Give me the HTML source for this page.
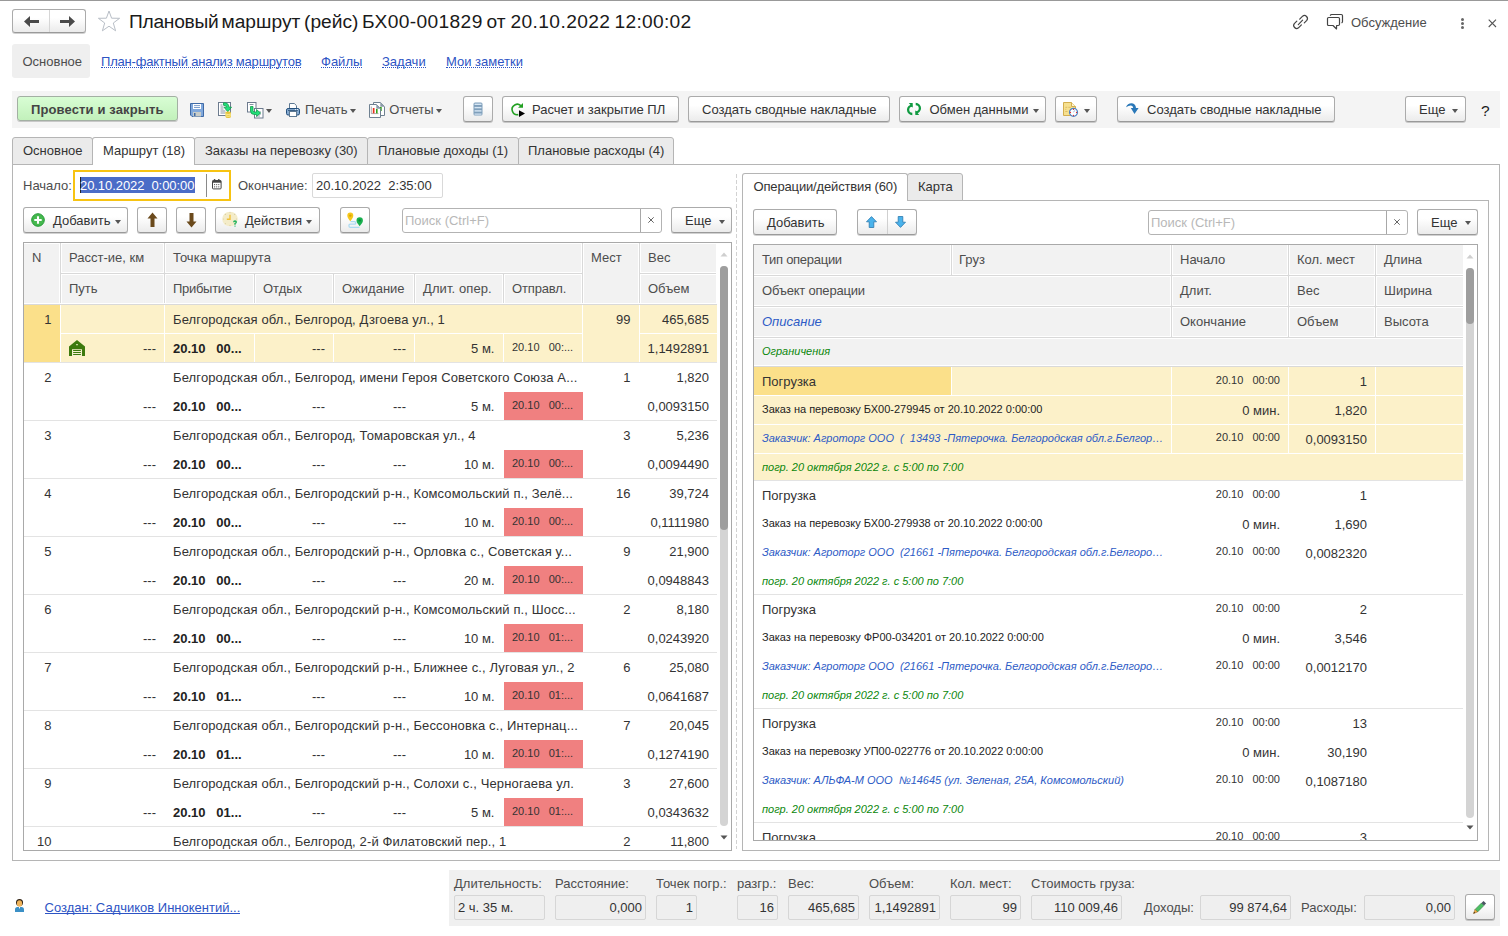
<!DOCTYPE html><html><head><meta charset="utf-8"><style>
html,body{margin:0;padding:0;background:#fff;width:1508px;height:936px;overflow:hidden;position:relative;font-family:"Liberation Sans",sans-serif;}
.t{position:absolute;white-space:nowrap;font-family:"Liberation Sans",sans-serif;}
.b{position:absolute;box-sizing:border-box;}
.btn{position:absolute;border:1px solid #ababab;border-bottom-color:#9a9a9a;border-radius:3px;background:linear-gradient(#ffffff 35%,#ebebeb);box-shadow:0 1px 0 rgba(0,0,0,0.18);}
svg{position:absolute;overflow:visible;}
a{color:inherit}
</style></head><body>
<div class="b" style="left:0px;top:0px;width:1508px;height:1px;background:#999;"></div>
<div class="btn" style="left:12px;top:9px;width:72px;height:22px;"></div>
<div class="b" style="left:49px;top:10px;width:1px;height:22px;background:#d6d6d6;"></div>
<svg style="left:24px;top:16px" width="15" height="11" viewBox="0 0 15 11"><path d="M0 5.5 L6 0 L6 4 L15 4 L15 7 L6 7 L6 11 Z" fill="#4a4a4a"/></svg>
<svg style="left:60px;top:16px" width="15" height="11" viewBox="0 0 15 11"><path d="M15 5.5 L9 0 L9 4 L0 4 L0 7 L9 7 L9 11 Z" fill="#4a4a4a"/></svg>
<svg style="left:97px;top:10px" width="24" height="22" viewBox="0 0 24 22"><path d="M12 1 L14.6 8.2 L22.6 8.3 L16.3 13 L18.6 20.8 L12 16.2 L5.4 20.8 L7.7 13 L1.4 8.3 L9.4 8.2 Z" fill="none" stroke="#b8bec6" stroke-width="1"/></svg>
<div class="t" style="left:129px;top:11.25px;font-size:19.2px;line-height:22px;color:#1a1a1a;letter-spacing:-0.27px;">Плановый</div>
<div class="t" style="left:221.5px;top:11.25px;font-size:19.2px;line-height:22px;color:#1a1a1a;letter-spacing:0px;">маршрут</div>
<div class="t" style="left:304px;top:11.25px;font-size:19.2px;line-height:22px;color:#1a1a1a;letter-spacing:0px;">(рейс)</div>
<div class="t" style="left:362px;top:11.25px;font-size:19.2px;line-height:22px;color:#1a1a1a;letter-spacing:0.36px;">БХ00-001829</div>
<div class="t" style="left:486.5px;top:11.25px;font-size:19.2px;line-height:22px;color:#1a1a1a;letter-spacing:0px;">от</div>
<div class="t" style="left:510.5px;top:11.25px;font-size:19.2px;line-height:22px;color:#1a1a1a;letter-spacing:0.38px;">20.10.2022</div>
<div class="t" style="left:614.5px;top:11.25px;font-size:19.2px;line-height:22px;color:#1a1a1a;letter-spacing:0.28px;">12:00:02</div>
<svg style="left:1293px;top:14px" width="16" height="17" viewBox="0 0 16 17"><g fill="none" stroke="#444" stroke-width="1.2" stroke-linecap="round"><path d="M5.3 10.6 L9.6 6.2"/><path d="M6.7 5.1 L9.6 2.2 A3 3 0 0 1 13.8 6.4 L11.3 8.9"/><path d="M8.4 10.9 L5.5 13.8 A3 3 0 0 1 1.3 9.6 L3.8 7.1"/></g></svg>
<svg style="left:1326px;top:13px" width="18" height="18" viewBox="0 0 18 18"><g fill="none" stroke="#444" stroke-width="1.2" stroke-linejoin="round"><path d="M2.7 4.5 H12.3 Q13.5 4.5 13.5 5.7 V11.3 Q13.5 12.5 12.3 12.5 H10.6 L10.5 16 L7 12.5 H2.5 Q1.5 12.5 1.5 11.3 V5.7 Q1.5 4.5 2.7 4.5 Z"/><path d="M4.4 2.3 Q4.7 1.5 5.6 1.5 H15.3 Q16.5 1.5 16.5 2.7 V8.5 Q16.5 9.4 15.9 9.7" stroke-linecap="round"/></g></svg>
<div class="t" style="left:1351px;top:15.20px;font-size:13px;line-height:15px;color:#4d4d4d;">Обсуждение</div>
<div class="b" style="left:1461px;top:18px;width:3px;height:3px;background:#666;border-radius:50%;"></div>
<div class="b" style="left:1461px;top:22px;width:3px;height:3px;background:#666;border-radius:50%;"></div>
<div class="b" style="left:1461px;top:26px;width:3px;height:3px;background:#666;border-radius:50%;"></div>
<svg style="left:1488px;top:18.5px" width="9" height="9" viewBox="0 0 9 9"><path d="M0.7 0.7 L8 8 M8 0.7 L0.7 8" stroke="#555" stroke-width="1.1"/></svg>
<div class="b" style="left:12px;top:44px;width:78px;height:34px;background:#efefef;border-radius:3px;"></div>
<div class="t" style="left:22.5px;top:53.60px;font-size:13px;line-height:15px;color:#4d4d4d;">Основное</div>
<div class="t" style="left:101px;top:53.60px;font-size:13px;line-height:15px;color:#2d54c4;letter-spacing:-0.2px;">План-фактный анализ маршрутов</div>
<div class="b" style="left:101px;top:67.1px;width:200px;height:1px;border-top:1px dotted #2d54c4;"></div>
<div class="t" style="left:321px;top:53.60px;font-size:13px;line-height:15px;color:#2d54c4;">Файлы</div>
<div class="b" style="left:321px;top:67.1px;width:41px;height:1px;border-top:1px dotted #2d54c4;"></div>
<div class="t" style="left:382px;top:53.60px;font-size:13px;line-height:15px;color:#2d54c4;">Задачи</div>
<div class="b" style="left:382px;top:67.1px;width:44px;height:1px;border-top:1px dotted #2d54c4;"></div>
<div class="t" style="left:446px;top:53.60px;font-size:13px;line-height:15px;color:#2d54c4;">Мои заметки</div>
<div class="b" style="left:446px;top:67.1px;width:76px;height:1px;border-top:1px dotted #2d54c4;"></div>
<div class="b" style="left:12px;top:91px;width:1488px;height:37px;background:#f4f4f4;"></div>
<div class="btn" style="left:17px;top:96px;width:159px;height:23px;border-color:#a3b0a3;background:linear-gradient(#d8fdd4,#c2f1bb);"></div>
<div class="t" style="left:31px;top:101.50px;font-size:13px;line-height:15px;color:#444;font-weight:bold;letter-spacing:0.13px;">Провести и закрыть</div>
<svg style="left:190px;top:103px" width="14" height="14" viewBox="0 0 14 14"><path d="M0.5 0.5 H13.5 V13.5 H2 L0.5 12 Z" fill="#80a8dc" stroke="#3f6aa6"/><rect x="3" y="1" width="8" height="5" fill="#fff"/><rect x="4" y="2.2" width="6" height="0.9" fill="#6f95c8"/><rect x="4" y="4.1" width="6" height="0.9" fill="#6f95c8"/><rect x="3" y="9" width="8" height="4.5" fill="#c8ccc8"/><rect x="4" y="10" width="1.5" height="3" fill="#3f6aa6"/></svg>
<svg style="left:218px;top:102px" width="16" height="17" viewBox="0 0 16 17"><rect x="0.5" y="0.5" width="12" height="13" fill="#fff" stroke="#6d7b8e"/><path d="M2.5 3 h2 M2.5 5 h3 M2.5 7 h3 M2.5 9 h5 M2.5 11 h5" stroke="#7a8799" stroke-width="0.9"/><path d="M5.5 0.8 Q10.5 0.3 11 5.2 L13.5 5.2 L9.8 9.8 L6 5.2 L8.6 5.2 Q8.3 3.2 5.5 3.3 Z" fill="#21e07a" stroke="#129a4a" stroke-width="0.8"/><path d="M7.5 10.5 Q7.5 9.5 10.2 9.5 Q13 9.5 13 10.5 V14.8 Q13 16 10.2 16 Q7.5 16 7.5 14.8 Z" fill="#e6c23a"/><path d="M7.5 12 Q10.2 13 13 12 M7.5 13.8 Q10.2 14.8 13 13.8" stroke="#fff3a0" stroke-width="0.9" fill="none"/></svg>
<svg style="left:247px;top:102px" width="17" height="17" viewBox="0 0 17 17"><rect x="0.5" y="0.5" width="8.5" height="9.5" fill="#fff" stroke="#6d7b8e"/><rect x="7.5" y="6.5" width="8.5" height="9.5" fill="#fff" stroke="#6d7b8e"/><path d="M2.5 2.5 h4" stroke="#7a8799" stroke-width="0.9"/><path d="M10 10 h4 M10 12 h4 M10 14 h3" stroke="#7a8799" stroke-width="0.8"/><path d="M3.5 4.5 L6 4.5 L6 8.5 Q6 10 8 10 L9.5 10 L9.5 7.5 L13.5 11 L9.5 14.5 L9.5 12.5 L7.5 12.5 Q3.5 12.5 3.5 9 Z" fill="#21e07a" stroke="#129a4a" stroke-width="0.8"/></svg>
<div class="b" style="left:266px;top:109px;width:0;height:0;border-left:3.5px solid transparent;border-right:3.5px solid transparent;border-top:4px solid #555;"></div>
<svg style="left:286px;top:103px" width="14" height="14" viewBox="0 0 14 14"><path d="M3.5 0.5 H8.3 L10.5 2.7 V5.5 H3.5 Z" fill="#fff" stroke="#5d7892"/><rect x="0.5" y="5.5" width="13" height="6.5" rx="1.6" fill="#86aad0" stroke="#234f7c"/><path d="M2 7.4 H12" stroke="#2a4f74" stroke-width="0.9"/><circle cx="9.6" cy="6.6" r="0.55" fill="#fff"/><circle cx="11.6" cy="6.6" r="0.55" fill="#fff"/><rect x="3.5" y="8.5" width="7" height="5" fill="#fff" stroke="#5d7892"/></svg>
<div class="t" style="left:305px;top:102.00px;font-size:13px;line-height:15px;color:#4d4d4d;">Печать</div>
<div class="b" style="left:350px;top:109px;width:0;height:0;border-left:3.5px solid transparent;border-right:3.5px solid transparent;border-top:4px solid #555;"></div>
<svg style="left:369px;top:102px" width="16" height="16" viewBox="0 0 16 16"><path d="M4.5 0.5 H11.3 L15.5 4.7 V13.5 H4.5 Z" fill="#fff" stroke="#6f8191"/><path d="M11.3 0.5 V4.7 H15.5 Z" fill="#8a9aa8"/><rect x="11" y="5" width="1.7" height="4" fill="#33a31a"/><path d="M0.5 2.5 H7.3 L11.5 6.7 V15.5 H0.5 Z" fill="#fff" stroke="#6f8191"/><path d="M7.3 2.5 V6.7 H11.5 Z" fill="#8a9aa8"/><path d="M2.3 4.5 V11.6 H9.5" fill="none" stroke="#8a8a8a" stroke-width="0.7"/><rect x="3.8" y="6" width="1.7" height="5.3" fill="#e8321e"/><rect x="7" y="7" width="1.6" height="4.3" fill="#33a31a"/></svg>
<div class="t" style="left:389.3px;top:102.00px;font-size:13px;line-height:15px;color:#4d4d4d;letter-spacing:-0.15px;">Отчеты</div>
<div class="b" style="left:436px;top:109px;width:0;height:0;border-left:3.5px solid transparent;border-right:3.5px solid transparent;border-top:4px solid #555;"></div>
<div class="btn" style="left:463px;top:96px;width:28px;height:24px;"></div>
<svg style="left:473px;top:102px" width="10" height="14" viewBox="0 0 10 14"><rect x="0.5" y="0.5" width="9" height="13" rx="1.5" fill="#7f9fbb"/><rect x="1.5" y="1.6" width="7" height="1.4" fill="#d6e6f4"/><rect x="1.5" y="4.9" width="7" height="1.4" fill="#d6e6f4"/><rect x="1.5" y="8.2" width="7" height="1.4" fill="#d6e6f4"/><rect x="1.5" y="11.5" width="7" height="1.2" fill="#d6e6f4"/></svg>
<div class="btn" style="left:502px;top:96px;width:175px;height:24px;"></div>
<svg style="left:510px;top:102px" width="16" height="16" viewBox="0 0 16 16"><path d="M11.4 4.3 A5.2 5.2 0 1 0 8.3 12.6" fill="none" stroke="#22a022" stroke-width="1.6"/><path d="M8 5.8 L13 5.8 L13 1 Z" fill="#22a022"/><path d="M9 8.2 L9 15 L15 11.5 Z" fill="#000"/></svg>
<div class="t" style="left:532px;top:102.00px;font-size:13px;line-height:15px;color:#333;">Расчет и закрытие ПЛ</div>
<div class="btn" style="left:688px;top:96px;width:200px;height:24px;"></div>
<div class="t" style="left:702px;top:102.00px;font-size:13px;line-height:15px;color:#333;">Создать сводные накладные</div>
<div class="btn" style="left:899px;top:96px;width:145px;height:24px;"></div>
<svg style="left:908px;top:103px" width="12" height="12" viewBox="0 0 12 12"><path d="M4.3 2.6 A4.2 4.2 0 0 0 4.3 11" fill="none" stroke="#109a40" stroke-width="2.3"/><path d="M0.8 0 L4.7 0 L4.7 4.7 Z" fill="#109a40"/><path d="M7.7 1 A4.2 4.2 0 0 1 7.7 9.4" fill="none" stroke="#109a40" stroke-width="2.3"/><path d="M7.3 7.3 L7.3 12 L11.2 12 Z" fill="#109a40"/></svg>
<div class="t" style="left:929.5px;top:102.00px;font-size:13px;line-height:15px;color:#333;">Обмен данными</div>
<div class="b" style="left:1033px;top:109px;width:0;height:0;border-left:3.5px solid transparent;border-right:3.5px solid transparent;border-top:4px solid #555;"></div>
<div class="btn" style="left:1055px;top:96px;width:40px;height:24px;"></div>
<svg style="left:1063px;top:102px" width="15" height="15" viewBox="0 0 15 15"><path d="M0.5 0.5 H8.5 L12.5 4.5 V13.5 H0.5 Z" fill="#f6e08f" stroke="#d3ae4f"/><path d="M8.5 0.5 V4.5 H12.5" fill="#fff6cf" stroke="#d3ae4f"/><path d="M2.3 5.3 h2 M5.3 5.3 h2.5 M2.3 7.3 h1 M2.3 9.5 h2.2" stroke="#d9b85e" stroke-width="0.9"/><circle cx="10.5" cy="10.3" r="4" fill="#fff" stroke="#4f82c0" stroke-width="1.2"/><circle cx="10.5" cy="7.3" r="0.6" fill="#e11"/><circle cx="10.5" cy="13.3" r="0.6" fill="#e11"/><circle cx="7.5" cy="10.3" r="0.6" fill="#e11"/><circle cx="13.5" cy="10.3" r="0.6" fill="#e11"/><path d="M10.5 10.3 L11.8 8.3" stroke="#8fb0da" stroke-width="0.9"/></svg>
<div class="b" style="left:1084px;top:109px;width:0;height:0;border-left:3.5px solid transparent;border-right:3.5px solid transparent;border-top:4px solid #555;"></div>
<div class="btn" style="left:1117px;top:96px;width:216px;height:24px;"></div>
<svg style="left:1126px;top:103px" width="13" height="11" viewBox="0 0 13 11"><path d="M0 4.3 Q1.5 0 6 0.2 Q9.6 0.6 10 5 L12.6 5 L8.5 11 L4.8 5 L7.2 5 Q7 2.6 5 2.4 Q2.6 2.3 0 4.3 Z" fill="#2a78b8"/></svg>
<div class="t" style="left:1147px;top:102.00px;font-size:13px;line-height:15px;color:#333;">Создать сводные накладные</div>
<div class="btn" style="left:1405px;top:96px;width:59px;height:24px;"></div>
<div class="t" style="left:1419px;top:102.00px;font-size:13px;line-height:15px;color:#333;">Еще</div>
<div class="b" style="left:1452px;top:109px;width:0;height:0;border-left:3.5px solid transparent;border-right:3.5px solid transparent;border-top:4px solid #555;"></div>
<div class="t" style="left:1481px;top:101.93px;font-size:15.5px;line-height:18px;color:#1a1a1a;">?</div>
<div class="b" style="left:12px;top:164px;width:1488px;height:697px;border:1px solid #b5b5b5;"></div>
<div class="b" style="left:12px;top:137px;width:81px;height:28px;background:#ebebeb;border:1px solid #b5b5b5;border-radius:3px 3px 0 0;"></div>
<div class="b" style="left:92px;top:137px;width:103px;height:28px;background:#fff;border:1px solid #b5b5b5;border-bottom:none;border-radius:3px 3px 0 0;"></div>
<div class="b" style="left:194px;top:137px;width:174px;height:28px;background:#ebebeb;border:1px solid #b5b5b5;border-radius:3px 3px 0 0;"></div>
<div class="b" style="left:367px;top:137px;width:152px;height:28px;background:#ebebeb;border:1px solid #b5b5b5;border-radius:3px 3px 0 0;"></div>
<div class="b" style="left:518px;top:137px;width:156px;height:28px;background:#ebebeb;border:1px solid #b5b5b5;border-radius:3px 3px 0 0;"></div>
<div class="b" style="left:93px;top:164px;width:101px;height:1px;background:#fff;"></div>
<div class="t" style="left:23px;top:142.70px;font-size:13px;line-height:15px;color:#333;">Основное</div>
<div class="t" style="left:103px;top:142.70px;font-size:13px;line-height:15px;color:#333;">Маршрут (18)</div>
<div class="t" style="left:205px;top:142.70px;font-size:13px;line-height:15px;color:#333;">Заказы на перевозку (30)</div>
<div class="t" style="left:378px;top:142.70px;font-size:13px;line-height:15px;color:#333;">Плановые доходы (1)</div>
<div class="t" style="left:528px;top:142.70px;font-size:13px;line-height:15px;color:#333;">Плановые расходы (4)</div>
<div class="t" style="left:23px;top:178.00px;font-size:13px;line-height:15px;color:#4d4d4d;">Начало:</div>
<div class="b" style="left:73px;top:170px;width:158px;height:31px;border:2px solid #f7c312;"></div>
<div class="b" style="left:75px;top:172px;width:154px;height:27px;background:#fff;border:1px solid #fff;"></div>
<div class="b" style="left:80px;top:177px;width:115px;height:16px;background:#4a6cc7;"></div>
<div class="b" style="left:80px;top:177px;width:1px;height:16px;background:#222;"></div>
<div class="t" style="left:80px;top:178.00px;font-size:13px;line-height:15px;color:#fff;letter-spacing:-0.07px;">20.10.2022&nbsp;&nbsp;0:00:00</div>
<div class="b" style="left:206px;top:174px;width:1px;height:23px;background:#8a8a8a;"></div>
<svg style="left:212px;top:179px" width="10" height="11" viewBox="0 0 10 11"><rect x="0.5" y="1.5" width="8.6" height="8.4" rx="0.9" fill="#fff" stroke="#444"/><rect x="0.5" y="1.5" width="8.6" height="2.2" fill="#444"/><circle cx="2.6" cy="1" r="0.9" fill="#444"/><circle cx="6.8" cy="1" r="0.9" fill="#444"/><g fill="#444"><circle cx="2.6" cy="5.6" r="0.6"/><circle cx="4.7" cy="5.6" r="0.6"/><circle cx="6.8" cy="5.6" r="0.6"/><circle cx="2.6" cy="7.8" r="0.6"/><circle cx="4.7" cy="7.8" r="0.6"/><circle cx="6.8" cy="7.8" r="0.6"/></g></svg>
<div class="t" style="left:238px;top:178.00px;font-size:13px;line-height:15px;color:#4d4d4d;">Окончание:</div>
<div class="b" style="left:312px;top:173px;width:131px;height:25px;border:1px solid #d9d9d9;border-radius:2px;background:#fff;"></div>
<div class="t" style="left:316px;top:178.00px;font-size:13px;line-height:15px;color:#333;">20.10.2022&nbsp;&nbsp;2:35:00</div>
<div class="btn" style="left:23px;top:207px;width:103px;height:24px;"></div>
<svg style="left:31px;top:213px" width="14" height="14" viewBox="0 0 14 14"><circle cx="7" cy="7" r="6.3" fill="#45b84e" stroke="#239a35" stroke-width="1"/><path d="M7 3.3 v7.4 M3.3 7 h7.4" stroke="#fff" stroke-width="2.1"/></svg>
<div class="t" style="left:53px;top:213.00px;font-size:13px;line-height:15px;color:#333;">Добавить</div>
<div class="b" style="left:114.5px;top:219.5px;width:0;height:0;border-left:3.5px solid transparent;border-right:3.5px solid transparent;border-top:4px solid #555;"></div>
<div class="btn" style="left:137px;top:207px;width:28px;height:24px;"></div>
<svg style="left:147px;top:212px" width="11" height="16" viewBox="0 0 11 16"><path d="M5.5 0.5 L10.5 6.5 L7.5 6.5 L7.5 15 L3.5 15 L3.5 6.5 L0.5 6.5 Z" fill="#6b4a1c"/></svg>
<div class="btn" style="left:176px;top:207px;width:28px;height:24px;"></div>
<svg style="left:186px;top:212px" width="11" height="16" viewBox="0 0 11 16"><path d="M5.5 15.5 L10.5 9.5 L7.5 9.5 L7.5 1 L3.5 1 L3.5 9.5 L0.5 9.5 Z" fill="#6b4a1c"/></svg>
<div class="btn" style="left:215px;top:207px;width:103px;height:24px;"></div>
<svg style="left:222px;top:211px" width="18" height="17" viewBox="0 0 18 17"><ellipse cx="8" cy="8" rx="7.8" ry="7.3" fill="#f4ecc9"/><g fill="#d9cfa6"><circle cx="8" cy="1.6" r="0.6"/><circle cx="8" cy="14.4" r="0.6"/><circle cx="1.6" cy="8" r="0.6"/><circle cx="14.4" cy="8" r="0.6"/><circle cx="3.4" cy="3.4" r="0.6"/><circle cx="12.6" cy="3.4" r="0.6"/><circle cx="3.4" cy="12.6" r="0.6"/></g><path d="M8 3.8 V8.2 H4.8" fill="none" stroke="#f2c23a" stroke-width="1.4"/><path d="M11.7 11.2 Q11.7 10 13 10 Q14.3 10 14.3 11.1 Q14.3 12 13 12.5 V13.7" fill="none" stroke="#17b05a" stroke-width="1.3"/><circle cx="13" cy="15.1" r="0.7" fill="#17b05a"/></svg>
<div class="t" style="left:245px;top:213.00px;font-size:13px;line-height:15px;color:#333;">Действия</div>
<div class="b" style="left:306px;top:219.5px;width:0;height:0;border-left:3.5px solid transparent;border-right:3.5px solid transparent;border-top:4px solid #555;"></div>
<div class="btn" style="left:340px;top:207px;width:28px;height:24px;"></div>
<svg style="left:346px;top:211px" width="18" height="19" viewBox="0 0 18 19"><path d="M4.5 10.6 H8.3 Q9.8 10.6 9.8 11.9 Q9.8 13.2 8.3 13.2 H4.3 Q2.9 13.2 2.9 14.7 Q2.9 16.3 4.4 16.3 H13.5" fill="none" stroke="#acdaf2" stroke-width="1.3"/><path d="M4.3 10.3 C2.6 7.8 1.3 6.6 1.3 4.5 A3 3 0 0 1 7.3 4.5 C7.3 6.6 6 7.8 4.3 10.3 Z" fill="#f6c81c"/><circle cx="4.3" cy="4.6" r="1.2" fill="#d9a20a"/><path d="M13.7 15.2 C11.9 12.6 10.5 11.5 10.5 9.4 A3.2 3.2 0 0 1 16.9 9.4 C16.9 11.5 15.5 12.6 13.7 15.2 Z" fill="#18b04e"/><circle cx="13.7" cy="9.4" r="1.2" fill="#0a8a38"/></svg>
<div class="b" style="left:402px;top:208px;width:260px;height:25px;border:1px solid #b3b3b3;border-radius:3px;background:#fff;"></div>
<div class="b" style="left:640px;top:209px;width:1px;height:23px;background:#a8a8a8;"></div>
<div class="t" style="left:405px;top:213.00px;font-size:13px;line-height:15px;color:#b8b8b8;">Поиск (Ctrl+F)</div>
<svg style="left:647px;top:216px" width="8" height="8" viewBox="0 0 8 8"><path d="M1.3 1.3 L6.7 6.7 M6.7 1.3 L1.3 6.7" stroke="#555" stroke-width="0.9"/></svg>
<div class="btn" style="left:671px;top:207px;width:59px;height:24px;"></div>
<div class="t" style="left:685px;top:213.00px;font-size:13px;line-height:15px;color:#333;">Еще</div>
<div class="b" style="left:718.5px;top:219.5px;width:0;height:0;border-left:3.5px solid transparent;border-right:3.5px solid transparent;border-top:4px solid #555;"></div>
<div class="b" style="left:736px;top:174px;width:1px;height:675px;background:repeating-linear-gradient(to bottom,#d2d2d2 0 4px,transparent 4px 6px);"></div>
<div class="b" style="left:23px;top:242px;width:709px;height:609px;border:1px solid #a9a9a9;background:#fff;"></div>
<div class="b" style="left:24px;top:244px;width:692px;height:61px;background:#f2f2f2;"></div>
<div class="b" style="left:59px;top:243px;width:1px;height:61px;background:#fff;"></div>
<div class="b" style="left:61px;top:243px;width:1px;height:61px;background:#fff;"></div>
<div class="b" style="left:60px;top:243px;width:1px;height:61px;background:#d9d9d9;"></div>
<div class="b" style="left:163px;top:243px;width:1px;height:61px;background:#fff;"></div>
<div class="b" style="left:165px;top:243px;width:1px;height:61px;background:#fff;"></div>
<div class="b" style="left:164px;top:243px;width:1px;height:61px;background:#d9d9d9;"></div>
<div class="b" style="left:581px;top:243px;width:1px;height:61px;background:#fff;"></div>
<div class="b" style="left:583px;top:243px;width:1px;height:61px;background:#fff;"></div>
<div class="b" style="left:582px;top:243px;width:1px;height:61px;background:#d9d9d9;"></div>
<div class="b" style="left:638px;top:243px;width:1px;height:61px;background:#fff;"></div>
<div class="b" style="left:640px;top:243px;width:1px;height:61px;background:#fff;"></div>
<div class="b" style="left:639px;top:243px;width:1px;height:61px;background:#d9d9d9;"></div>
<div class="b" style="left:253px;top:274px;width:1px;height:30px;background:#fff;"></div>
<div class="b" style="left:255px;top:274px;width:1px;height:30px;background:#fff;"></div>
<div class="b" style="left:254px;top:274px;width:1px;height:30px;background:#d9d9d9;"></div>
<div class="b" style="left:332px;top:274px;width:1px;height:30px;background:#fff;"></div>
<div class="b" style="left:334px;top:274px;width:1px;height:30px;background:#fff;"></div>
<div class="b" style="left:333px;top:274px;width:1px;height:30px;background:#d9d9d9;"></div>
<div class="b" style="left:413px;top:274px;width:1px;height:30px;background:#fff;"></div>
<div class="b" style="left:415px;top:274px;width:1px;height:30px;background:#fff;"></div>
<div class="b" style="left:414px;top:274px;width:1px;height:30px;background:#d9d9d9;"></div>
<div class="b" style="left:502px;top:274px;width:1px;height:30px;background:#fff;"></div>
<div class="b" style="left:504px;top:274px;width:1px;height:30px;background:#fff;"></div>
<div class="b" style="left:503px;top:274px;width:1px;height:30px;background:#d9d9d9;"></div>
<div class="b" style="left:61px;top:272px;width:521px;height:1px;background:#fff;"></div>
<div class="b" style="left:61px;top:274px;width:521px;height:1px;background:#fff;"></div>
<div class="b" style="left:61px;top:273px;width:521px;height:1px;background:#d9d9d9;"></div>
<div class="b" style="left:640px;top:272px;width:76px;height:1px;background:#fff;"></div>
<div class="b" style="left:640px;top:274px;width:76px;height:1px;background:#fff;"></div>
<div class="b" style="left:640px;top:273px;width:76px;height:1px;background:#d9d9d9;"></div>
<div class="b" style="left:60px;top:243px;width:1px;height:62px;background:#d9d9d9;"></div>
<div class="b" style="left:164px;top:243px;width:1px;height:62px;background:#d9d9d9;"></div>
<div class="b" style="left:582px;top:243px;width:1px;height:62px;background:#d9d9d9;"></div>
<div class="b" style="left:639px;top:243px;width:1px;height:62px;background:#d9d9d9;"></div>
<div class="b" style="left:254px;top:273px;width:1px;height:32px;background:#d9d9d9;"></div>
<div class="b" style="left:333px;top:273px;width:1px;height:32px;background:#d9d9d9;"></div>
<div class="b" style="left:414px;top:273px;width:1px;height:32px;background:#d9d9d9;"></div>
<div class="b" style="left:503px;top:273px;width:1px;height:32px;background:#d9d9d9;"></div>
<div class="b" style="left:24px;top:303px;width:693px;height:1px;background:#fff;"></div>
<div class="b" style="left:24px;top:304px;width:693px;height:1px;background:#d9d9d9;"></div>
<div class="t" style="left:32px;top:250.00px;font-size:13px;line-height:15px;color:#4d4d4d;">N</div>
<div class="t" style="left:69px;top:250.00px;font-size:13px;line-height:15px;color:#4d4d4d;">Расст-ие, км</div>
<div class="t" style="left:173px;top:250.00px;font-size:13px;line-height:15px;color:#4d4d4d;">Точка маршрута</div>
<div class="t" style="left:591px;top:250.00px;font-size:13px;line-height:15px;color:#4d4d4d;">Мест</div>
<div class="t" style="left:648px;top:250.00px;font-size:13px;line-height:15px;color:#4d4d4d;">Вес</div>
<div class="t" style="left:69px;top:281.00px;font-size:13px;line-height:15px;color:#4d4d4d;">Путь</div>
<div class="t" style="left:173px;top:281.00px;font-size:13px;line-height:15px;color:#4d4d4d;letter-spacing:-0.3px;">Прибытие</div>
<div class="t" style="left:263px;top:281.00px;font-size:13px;line-height:15px;color:#4d4d4d;">Отдых</div>
<div class="t" style="left:342px;top:281.00px;font-size:13px;line-height:15px;color:#4d4d4d;">Ожидание</div>
<div class="t" style="left:423px;top:281.00px;font-size:13px;line-height:15px;color:#4d4d4d;letter-spacing:0.1px;">Длит. опер.</div>
<div class="t" style="left:512px;top:281.00px;font-size:13px;line-height:15px;color:#4d4d4d;letter-spacing:-0.15px;">Отправл.</div>
<div class="t" style="left:648px;top:281.00px;font-size:13px;line-height:15px;color:#4d4d4d;">Объем</div>
<div class="b" style="left:0;top:0;width:1508px;height:936px;clip-path:inset(305px 791px 86px 24px);">
<div class="b" style="left:24px;top:305px;width:693px;height:57px;background:#fcf1c9;"></div>
<div class="b" style="left:24px;top:305px;width:36px;height:57px;background:#fbe08a;"></div>
<div class="b" style="left:60px;top:305px;width:1px;height:57px;background:#ffffff;"></div>
<div class="b" style="left:164px;top:305px;width:1px;height:57px;background:#ffffff;"></div>
<div class="b" style="left:582px;top:305px;width:1px;height:57px;background:#ffffff;"></div>
<div class="b" style="left:639px;top:305px;width:1px;height:57px;background:#ffffff;"></div>
<div class="b" style="left:254px;top:334px;width:1px;height:28px;background:#ffffff;"></div>
<div class="b" style="left:333px;top:334px;width:1px;height:28px;background:#ffffff;"></div>
<div class="b" style="left:414px;top:334px;width:1px;height:28px;background:#ffffff;"></div>
<div class="b" style="left:503px;top:334px;width:1px;height:28px;background:#ffffff;"></div>
<div class="b" style="left:61px;top:333px;width:521px;height:1px;background:#ffffff;"></div>
<div class="b" style="left:640px;top:333px;width:77px;height:1px;background:#ffffff;"></div>
<div class="b" style="left:24px;top:362px;width:693px;height:1px;background:#e3e3e3;"></div>
<div class="t" style="left:-348.5px;width:400px;text-align:right;top:312.30px;font-size:13px;line-height:15px;color:#333;">1</div>
<div class="t" style="left:173px;top:312.30px;font-size:13px;line-height:15px;color:#333;letter-spacing:0.13px;">Белгородская обл., Белгород, Дзгоева ул., 1</div>
<div class="t" style="left:230.5px;width:400px;text-align:right;top:312.30px;font-size:13px;line-height:15px;color:#333;">99</div>
<div class="t" style="left:309px;width:400px;text-align:right;top:312.30px;font-size:13px;line-height:15px;color:#333;">465,685</div>
<div class="t" style="left:-244px;width:400px;text-align:right;top:341.00px;font-size:13px;line-height:15px;color:#333;">---</div>
<div class="t" style="left:173px;top:341.00px;font-size:13px;line-height:15px;color:#222;font-weight:bold;">20.10&nbsp;&nbsp;&nbsp;00...</div>
<div class="t" style="left:-75px;width:400px;text-align:right;top:341.00px;font-size:13px;line-height:15px;color:#333;">---</div>
<div class="t" style="left:6px;width:400px;text-align:right;top:341.00px;font-size:13px;line-height:15px;color:#333;">---</div>
<div class="t" style="left:94.5px;width:400px;text-align:right;top:341.00px;font-size:13px;line-height:15px;color:#333;">5 м.</div>
<div class="t" style="left:512px;top:341.19px;font-size:11px;line-height:13px;color:#333;">20.10&nbsp;&nbsp;&nbsp;00:...</div>
<div class="t" style="left:309px;width:400px;text-align:right;top:341.00px;font-size:13px;line-height:15px;color:#333;">1,1492891</div>
<svg style="left:69px;top:340px" width="16" height="16" viewBox="0 0 16 16"><path d="M8 0 L16 6.5 V16 H13 V9.5 H3 V16 H0 V6.5 Z" fill="#3d7a0e"/><rect x="3" y="9.5" width="10" height="6.5" fill="#f3f0cf"/><rect x="4" y="10" width="8" height="1.1" rx="0.5" fill="#3d7a0e"/><rect x="4" y="12" width="8" height="1.1" rx="0.5" fill="#3d7a0e"/><rect x="4" y="14" width="8" height="1.1" rx="0.5" fill="#3d7a0e"/><ellipse cx="8" cy="4.7" rx="1.1" ry="0.6" fill="#dfe8b8"/></svg>
<div class="b" style="left:504px;top:392px;width:79px;height:28px;background:#f08080;"></div>
<div class="b" style="left:24px;top:420px;width:693px;height:1px;background:#e3e3e3;"></div>
<div class="t" style="left:-348.5px;width:400px;text-align:right;top:370.30px;font-size:13px;line-height:15px;color:#333;">2</div>
<div class="t" style="left:173px;top:370.30px;font-size:13px;line-height:15px;color:#333;letter-spacing:0.13px;">Белгородская обл., Белгород, имени Героя Советского Союза А...</div>
<div class="t" style="left:230.5px;width:400px;text-align:right;top:370.30px;font-size:13px;line-height:15px;color:#333;">1</div>
<div class="t" style="left:309px;width:400px;text-align:right;top:370.30px;font-size:13px;line-height:15px;color:#333;">1,820</div>
<div class="t" style="left:-244px;width:400px;text-align:right;top:399.00px;font-size:13px;line-height:15px;color:#333;">---</div>
<div class="t" style="left:173px;top:399.00px;font-size:13px;line-height:15px;color:#222;font-weight:bold;">20.10&nbsp;&nbsp;&nbsp;00...</div>
<div class="t" style="left:-75px;width:400px;text-align:right;top:399.00px;font-size:13px;line-height:15px;color:#333;">---</div>
<div class="t" style="left:6px;width:400px;text-align:right;top:399.00px;font-size:13px;line-height:15px;color:#333;">---</div>
<div class="t" style="left:94.5px;width:400px;text-align:right;top:399.00px;font-size:13px;line-height:15px;color:#333;">5 м.</div>
<div class="t" style="left:512px;top:399.19px;font-size:11px;line-height:13px;color:#333;">20.10&nbsp;&nbsp;&nbsp;00:...</div>
<div class="t" style="left:309px;width:400px;text-align:right;top:399.00px;font-size:13px;line-height:15px;color:#333;">0,0093150</div>
<div class="b" style="left:504px;top:450px;width:79px;height:28px;background:#f08080;"></div>
<div class="b" style="left:24px;top:478px;width:693px;height:1px;background:#e3e3e3;"></div>
<div class="t" style="left:-348.5px;width:400px;text-align:right;top:428.30px;font-size:13px;line-height:15px;color:#333;">3</div>
<div class="t" style="left:173px;top:428.30px;font-size:13px;line-height:15px;color:#333;letter-spacing:0.13px;">Белгородская обл., Белгород, Томаровская ул., 4</div>
<div class="t" style="left:230.5px;width:400px;text-align:right;top:428.30px;font-size:13px;line-height:15px;color:#333;">3</div>
<div class="t" style="left:309px;width:400px;text-align:right;top:428.30px;font-size:13px;line-height:15px;color:#333;">5,236</div>
<div class="t" style="left:-244px;width:400px;text-align:right;top:457.00px;font-size:13px;line-height:15px;color:#333;">---</div>
<div class="t" style="left:173px;top:457.00px;font-size:13px;line-height:15px;color:#222;font-weight:bold;">20.10&nbsp;&nbsp;&nbsp;00...</div>
<div class="t" style="left:-75px;width:400px;text-align:right;top:457.00px;font-size:13px;line-height:15px;color:#333;">---</div>
<div class="t" style="left:6px;width:400px;text-align:right;top:457.00px;font-size:13px;line-height:15px;color:#333;">---</div>
<div class="t" style="left:94.5px;width:400px;text-align:right;top:457.00px;font-size:13px;line-height:15px;color:#333;">10 м.</div>
<div class="t" style="left:512px;top:457.19px;font-size:11px;line-height:13px;color:#333;">20.10&nbsp;&nbsp;&nbsp;00:...</div>
<div class="t" style="left:309px;width:400px;text-align:right;top:457.00px;font-size:13px;line-height:15px;color:#333;">0,0094490</div>
<div class="b" style="left:504px;top:508px;width:79px;height:28px;background:#f08080;"></div>
<div class="b" style="left:24px;top:536px;width:693px;height:1px;background:#e3e3e3;"></div>
<div class="t" style="left:-348.5px;width:400px;text-align:right;top:486.30px;font-size:13px;line-height:15px;color:#333;">4</div>
<div class="t" style="left:173px;top:486.30px;font-size:13px;line-height:15px;color:#333;letter-spacing:0.13px;">Белгородская обл., Белгородский р-н., Комсомольский п., Зелё...</div>
<div class="t" style="left:230.5px;width:400px;text-align:right;top:486.30px;font-size:13px;line-height:15px;color:#333;">16</div>
<div class="t" style="left:309px;width:400px;text-align:right;top:486.30px;font-size:13px;line-height:15px;color:#333;">39,724</div>
<div class="t" style="left:-244px;width:400px;text-align:right;top:515.00px;font-size:13px;line-height:15px;color:#333;">---</div>
<div class="t" style="left:173px;top:515.00px;font-size:13px;line-height:15px;color:#222;font-weight:bold;">20.10&nbsp;&nbsp;&nbsp;00...</div>
<div class="t" style="left:-75px;width:400px;text-align:right;top:515.00px;font-size:13px;line-height:15px;color:#333;">---</div>
<div class="t" style="left:6px;width:400px;text-align:right;top:515.00px;font-size:13px;line-height:15px;color:#333;">---</div>
<div class="t" style="left:94.5px;width:400px;text-align:right;top:515.00px;font-size:13px;line-height:15px;color:#333;">10 м.</div>
<div class="t" style="left:512px;top:515.19px;font-size:11px;line-height:13px;color:#333;">20.10&nbsp;&nbsp;&nbsp;00:...</div>
<div class="t" style="left:309px;width:400px;text-align:right;top:515.00px;font-size:13px;line-height:15px;color:#333;">0,1111980</div>
<div class="b" style="left:504px;top:566px;width:79px;height:28px;background:#f08080;"></div>
<div class="b" style="left:24px;top:594px;width:693px;height:1px;background:#e3e3e3;"></div>
<div class="t" style="left:-348.5px;width:400px;text-align:right;top:544.30px;font-size:13px;line-height:15px;color:#333;">5</div>
<div class="t" style="left:173px;top:544.30px;font-size:13px;line-height:15px;color:#333;letter-spacing:0.13px;">Белгородская обл., Белгородский р-н., Орловка с., Советская у...</div>
<div class="t" style="left:230.5px;width:400px;text-align:right;top:544.30px;font-size:13px;line-height:15px;color:#333;">9</div>
<div class="t" style="left:309px;width:400px;text-align:right;top:544.30px;font-size:13px;line-height:15px;color:#333;">21,900</div>
<div class="t" style="left:-244px;width:400px;text-align:right;top:573.00px;font-size:13px;line-height:15px;color:#333;">---</div>
<div class="t" style="left:173px;top:573.00px;font-size:13px;line-height:15px;color:#222;font-weight:bold;">20.10&nbsp;&nbsp;&nbsp;00...</div>
<div class="t" style="left:-75px;width:400px;text-align:right;top:573.00px;font-size:13px;line-height:15px;color:#333;">---</div>
<div class="t" style="left:6px;width:400px;text-align:right;top:573.00px;font-size:13px;line-height:15px;color:#333;">---</div>
<div class="t" style="left:94.5px;width:400px;text-align:right;top:573.00px;font-size:13px;line-height:15px;color:#333;">20 м.</div>
<div class="t" style="left:512px;top:573.19px;font-size:11px;line-height:13px;color:#333;">20.10&nbsp;&nbsp;&nbsp;00:...</div>
<div class="t" style="left:309px;width:400px;text-align:right;top:573.00px;font-size:13px;line-height:15px;color:#333;">0,0948843</div>
<div class="b" style="left:504px;top:624px;width:79px;height:28px;background:#f08080;"></div>
<div class="b" style="left:24px;top:652px;width:693px;height:1px;background:#e3e3e3;"></div>
<div class="t" style="left:-348.5px;width:400px;text-align:right;top:602.30px;font-size:13px;line-height:15px;color:#333;">6</div>
<div class="t" style="left:173px;top:602.30px;font-size:13px;line-height:15px;color:#333;letter-spacing:0.13px;">Белгородская обл., Белгородский р-н., Комсомольский п., Шосс...</div>
<div class="t" style="left:230.5px;width:400px;text-align:right;top:602.30px;font-size:13px;line-height:15px;color:#333;">2</div>
<div class="t" style="left:309px;width:400px;text-align:right;top:602.30px;font-size:13px;line-height:15px;color:#333;">8,180</div>
<div class="t" style="left:-244px;width:400px;text-align:right;top:631.00px;font-size:13px;line-height:15px;color:#333;">---</div>
<div class="t" style="left:173px;top:631.00px;font-size:13px;line-height:15px;color:#222;font-weight:bold;">20.10&nbsp;&nbsp;&nbsp;00...</div>
<div class="t" style="left:-75px;width:400px;text-align:right;top:631.00px;font-size:13px;line-height:15px;color:#333;">---</div>
<div class="t" style="left:6px;width:400px;text-align:right;top:631.00px;font-size:13px;line-height:15px;color:#333;">---</div>
<div class="t" style="left:94.5px;width:400px;text-align:right;top:631.00px;font-size:13px;line-height:15px;color:#333;">10 м.</div>
<div class="t" style="left:512px;top:631.19px;font-size:11px;line-height:13px;color:#333;">20.10&nbsp;&nbsp;&nbsp;01:...</div>
<div class="t" style="left:309px;width:400px;text-align:right;top:631.00px;font-size:13px;line-height:15px;color:#333;">0,0243920</div>
<div class="b" style="left:504px;top:682px;width:79px;height:28px;background:#f08080;"></div>
<div class="b" style="left:24px;top:710px;width:693px;height:1px;background:#e3e3e3;"></div>
<div class="t" style="left:-348.5px;width:400px;text-align:right;top:660.30px;font-size:13px;line-height:15px;color:#333;">7</div>
<div class="t" style="left:173px;top:660.30px;font-size:13px;line-height:15px;color:#333;letter-spacing:0.13px;">Белгородская обл., Белгородский р-н., Ближнее с., Луговая ул., 2</div>
<div class="t" style="left:230.5px;width:400px;text-align:right;top:660.30px;font-size:13px;line-height:15px;color:#333;">6</div>
<div class="t" style="left:309px;width:400px;text-align:right;top:660.30px;font-size:13px;line-height:15px;color:#333;">25,080</div>
<div class="t" style="left:-244px;width:400px;text-align:right;top:689.00px;font-size:13px;line-height:15px;color:#333;">---</div>
<div class="t" style="left:173px;top:689.00px;font-size:13px;line-height:15px;color:#222;font-weight:bold;">20.10&nbsp;&nbsp;&nbsp;01...</div>
<div class="t" style="left:-75px;width:400px;text-align:right;top:689.00px;font-size:13px;line-height:15px;color:#333;">---</div>
<div class="t" style="left:6px;width:400px;text-align:right;top:689.00px;font-size:13px;line-height:15px;color:#333;">---</div>
<div class="t" style="left:94.5px;width:400px;text-align:right;top:689.00px;font-size:13px;line-height:15px;color:#333;">10 м.</div>
<div class="t" style="left:512px;top:689.19px;font-size:11px;line-height:13px;color:#333;">20.10&nbsp;&nbsp;&nbsp;01:...</div>
<div class="t" style="left:309px;width:400px;text-align:right;top:689.00px;font-size:13px;line-height:15px;color:#333;">0,0641687</div>
<div class="b" style="left:504px;top:740px;width:79px;height:28px;background:#f08080;"></div>
<div class="b" style="left:24px;top:768px;width:693px;height:1px;background:#e3e3e3;"></div>
<div class="t" style="left:-348.5px;width:400px;text-align:right;top:718.30px;font-size:13px;line-height:15px;color:#333;">8</div>
<div class="t" style="left:173px;top:718.30px;font-size:13px;line-height:15px;color:#333;letter-spacing:0.13px;">Белгородская обл., Белгородский р-н., Бессоновка с., Интернац...</div>
<div class="t" style="left:230.5px;width:400px;text-align:right;top:718.30px;font-size:13px;line-height:15px;color:#333;">7</div>
<div class="t" style="left:309px;width:400px;text-align:right;top:718.30px;font-size:13px;line-height:15px;color:#333;">20,045</div>
<div class="t" style="left:-244px;width:400px;text-align:right;top:747.00px;font-size:13px;line-height:15px;color:#333;">---</div>
<div class="t" style="left:173px;top:747.00px;font-size:13px;line-height:15px;color:#222;font-weight:bold;">20.10&nbsp;&nbsp;&nbsp;01...</div>
<div class="t" style="left:-75px;width:400px;text-align:right;top:747.00px;font-size:13px;line-height:15px;color:#333;">---</div>
<div class="t" style="left:6px;width:400px;text-align:right;top:747.00px;font-size:13px;line-height:15px;color:#333;">---</div>
<div class="t" style="left:94.5px;width:400px;text-align:right;top:747.00px;font-size:13px;line-height:15px;color:#333;">10 м.</div>
<div class="t" style="left:512px;top:747.19px;font-size:11px;line-height:13px;color:#333;">20.10&nbsp;&nbsp;&nbsp;01:...</div>
<div class="t" style="left:309px;width:400px;text-align:right;top:747.00px;font-size:13px;line-height:15px;color:#333;">0,1274190</div>
<div class="b" style="left:504px;top:798px;width:79px;height:28px;background:#f08080;"></div>
<div class="b" style="left:24px;top:826px;width:693px;height:1px;background:#e3e3e3;"></div>
<div class="t" style="left:-348.5px;width:400px;text-align:right;top:776.30px;font-size:13px;line-height:15px;color:#333;">9</div>
<div class="t" style="left:173px;top:776.30px;font-size:13px;line-height:15px;color:#333;letter-spacing:0.13px;">Белгородская обл., Белгородский р-н., Солохи с., Черногаева ул.</div>
<div class="t" style="left:230.5px;width:400px;text-align:right;top:776.30px;font-size:13px;line-height:15px;color:#333;">3</div>
<div class="t" style="left:309px;width:400px;text-align:right;top:776.30px;font-size:13px;line-height:15px;color:#333;">27,600</div>
<div class="t" style="left:-244px;width:400px;text-align:right;top:805.00px;font-size:13px;line-height:15px;color:#333;">---</div>
<div class="t" style="left:173px;top:805.00px;font-size:13px;line-height:15px;color:#222;font-weight:bold;">20.10&nbsp;&nbsp;&nbsp;01...</div>
<div class="t" style="left:-75px;width:400px;text-align:right;top:805.00px;font-size:13px;line-height:15px;color:#333;">---</div>
<div class="t" style="left:6px;width:400px;text-align:right;top:805.00px;font-size:13px;line-height:15px;color:#333;">---</div>
<div class="t" style="left:94.5px;width:400px;text-align:right;top:805.00px;font-size:13px;line-height:15px;color:#333;">5 м.</div>
<div class="t" style="left:512px;top:805.19px;font-size:11px;line-height:13px;color:#333;">20.10&nbsp;&nbsp;&nbsp;01:...</div>
<div class="t" style="left:309px;width:400px;text-align:right;top:805.00px;font-size:13px;line-height:15px;color:#333;">0,0343632</div>
<div class="b" style="left:504px;top:856px;width:79px;height:28px;background:#f08080;"></div>
<div class="b" style="left:24px;top:884px;width:693px;height:1px;background:#e3e3e3;"></div>
<div class="t" style="left:-348.5px;width:400px;text-align:right;top:834.30px;font-size:13px;line-height:15px;color:#333;">10</div>
<div class="t" style="left:173px;top:834.30px;font-size:13px;line-height:15px;color:#333;letter-spacing:0.13px;">Белгородская обл., Белгород, 2-й Филатовский пер., 1</div>
<div class="t" style="left:230.5px;width:400px;text-align:right;top:834.30px;font-size:13px;line-height:15px;color:#333;">2</div>
<div class="t" style="left:309px;width:400px;text-align:right;top:834.30px;font-size:13px;line-height:15px;color:#333;">11,800</div>
<div class="t" style="left:-244px;width:400px;text-align:right;top:863.00px;font-size:13px;line-height:15px;color:#333;">---</div>
<div class="t" style="left:173px;top:863.00px;font-size:13px;line-height:15px;color:#222;font-weight:bold;">20.10&nbsp;&nbsp;&nbsp;01...</div>
<div class="t" style="left:-75px;width:400px;text-align:right;top:863.00px;font-size:13px;line-height:15px;color:#333;">---</div>
<div class="t" style="left:6px;width:400px;text-align:right;top:863.00px;font-size:13px;line-height:15px;color:#333;">---</div>
<div class="t" style="left:94.5px;width:400px;text-align:right;top:863.00px;font-size:13px;line-height:15px;color:#333;">5 м.</div>
<div class="t" style="left:512px;top:863.19px;font-size:11px;line-height:13px;color:#333;">20.10&nbsp;&nbsp;&nbsp;01:...</div>
</div>
<svg style="left:718px;top:250px" width="12" height="8" viewBox="0 0 12 8"><path d="M2.5 6.5 L6 2.5 L9.5 6.5 Z" fill="#cfcfcf"/></svg>
<div class="b" style="left:720px;top:266px;width:8px;height:560px;background:#d4d4d4;border-radius:4px;"></div>
<div class="b" style="left:720px;top:266px;width:8px;height:264px;background:#9e9e9e;border-radius:4px;"></div>
<svg style="left:718px;top:834px" width="12" height="8" viewBox="0 0 12 8"><path d="M2.5 1.5 L6 5.5 L9.5 1.5 Z" fill="#555"/></svg>
<div class="b" style="left:742px;top:200px;width:747px;height:651px;border:1px solid #b5b5b5;"></div>
<div class="b" style="left:742px;top:173px;width:166px;height:28px;background:#fff;border:1px solid #b5b5b5;border-bottom:none;border-radius:3px 3px 0 0;"></div>
<div class="b" style="left:907px;top:173px;width:56px;height:28px;background:#ebebeb;border:1px solid #b5b5b5;border-radius:3px 3px 0 0;"></div>
<div class="b" style="left:743px;top:200px;width:164px;height:1px;background:#fff;"></div>
<div class="t" style="left:753.5px;top:179.00px;font-size:13px;line-height:15px;color:#333;letter-spacing:-0.15px;">Операции/действия (60)</div>
<div class="t" style="left:918px;top:179.00px;font-size:13px;line-height:15px;color:#333;">Карта</div>
<div class="btn" style="left:753px;top:209px;width:82px;height:24px;"></div>
<div class="t" style="left:767px;top:215.00px;font-size:13px;line-height:15px;color:#333;">Добавить</div>
<div class="btn" style="left:857px;top:209px;width:58px;height:24px;"></div>
<div class="b" style="left:887px;top:210px;width:1px;height:24px;background:#d0d0d0;"></div>
<svg style="left:866px;top:216px" width="11" height="12" viewBox="0 0 11 12"><path d="M5.5 0.6 L10.5 5.8 H7.8 V11.5 H3.2 V5.8 H0.5 Z" fill="#4ab3ec" stroke="#2b78ad" stroke-width="0.8"/></svg>
<svg style="left:895px;top:216px" width="11" height="12" viewBox="0 0 11 12"><path d="M3.2 0.5 H7.8 V6.2 H10.5 L5.5 11.4 L0.5 6.2 H3.2 Z" fill="#4ab3ec" stroke="#2b78ad" stroke-width="0.8"/></svg>
<div class="b" style="left:1148px;top:210px;width:260px;height:25px;border:1px solid #b3b3b3;border-radius:3px;background:#fff;"></div>
<div class="b" style="left:1386px;top:211px;width:1px;height:23px;background:#a8a8a8;"></div>
<div class="t" style="left:1151px;top:215.00px;font-size:13px;line-height:15px;color:#b8b8b8;">Поиск (Ctrl+F)</div>
<svg style="left:1393px;top:218px" width="8" height="8" viewBox="0 0 8 8"><path d="M1.3 1.3 L6.7 6.7 M6.7 1.3 L1.3 6.7" stroke="#555" stroke-width="0.9"/></svg>
<div class="btn" style="left:1417px;top:209px;width:59px;height:24px;"></div>
<div class="t" style="left:1431px;top:215.00px;font-size:13px;line-height:15px;color:#333;">Еще</div>
<div class="b" style="left:1465px;top:221px;width:0;height:0;border-left:3.5px solid transparent;border-right:3.5px solid transparent;border-top:4px solid #555;"></div>
<div class="b" style="left:753px;top:244px;width:725px;height:597px;border:1px solid #a9a9a9;background:#fff;"></div>
<div class="b" style="left:754px;top:245px;width:709px;height:122px;background:#f2f2f2;"></div>
<div class="b" style="left:950px;top:245px;width:1px;height:30px;background:#fff;"></div>
<div class="b" style="left:952px;top:245px;width:1px;height:30px;background:#fff;"></div>
<div class="b" style="left:951px;top:245px;width:1px;height:30px;background:#d9d9d9;"></div>
<div class="b" style="left:1170px;top:245px;width:1px;height:92px;background:#fff;"></div>
<div class="b" style="left:1172px;top:245px;width:1px;height:92px;background:#fff;"></div>
<div class="b" style="left:1171px;top:245px;width:1px;height:92px;background:#d9d9d9;"></div>
<div class="b" style="left:1287px;top:245px;width:1px;height:92px;background:#fff;"></div>
<div class="b" style="left:1289px;top:245px;width:1px;height:92px;background:#fff;"></div>
<div class="b" style="left:1288px;top:245px;width:1px;height:92px;background:#d9d9d9;"></div>
<div class="b" style="left:1374px;top:245px;width:1px;height:92px;background:#fff;"></div>
<div class="b" style="left:1376px;top:245px;width:1px;height:92px;background:#fff;"></div>
<div class="b" style="left:1375px;top:245px;width:1px;height:92px;background:#d9d9d9;"></div>
<div class="b" style="left:754px;top:274px;width:709px;height:1px;background:#fff;"></div>
<div class="b" style="left:754px;top:276px;width:709px;height:1px;background:#fff;"></div>
<div class="b" style="left:754px;top:275px;width:709px;height:1px;background:#d9d9d9;"></div>
<div class="b" style="left:754px;top:305px;width:709px;height:1px;background:#fff;"></div>
<div class="b" style="left:754px;top:307px;width:709px;height:1px;background:#fff;"></div>
<div class="b" style="left:754px;top:306px;width:709px;height:1px;background:#d9d9d9;"></div>
<div class="b" style="left:754px;top:336px;width:709px;height:1px;background:#fff;"></div>
<div class="b" style="left:754px;top:338px;width:709px;height:1px;background:#fff;"></div>
<div class="b" style="left:754px;top:337px;width:709px;height:1px;background:#d9d9d9;"></div>
<div class="b" style="left:951px;top:245px;width:1px;height:31px;background:#d9d9d9;"></div>
<div class="b" style="left:1171px;top:245px;width:1px;height:93px;background:#d9d9d9;"></div>
<div class="b" style="left:1288px;top:245px;width:1px;height:93px;background:#d9d9d9;"></div>
<div class="b" style="left:1375px;top:245px;width:1px;height:93px;background:#d9d9d9;"></div>
<div class="b" style="left:754px;top:275px;width:709px;height:1px;background:#d9d9d9;"></div>
<div class="b" style="left:754px;top:306px;width:709px;height:1px;background:#d9d9d9;"></div>
<div class="b" style="left:754px;top:337px;width:709px;height:1px;background:#d9d9d9;"></div>
<div class="b" style="left:754px;top:365px;width:709px;height:1px;background:#fff;"></div>
<div class="b" style="left:754px;top:366px;width:709px;height:1px;background:#d9d9d9;"></div>
<div class="t" style="left:762px;top:252.00px;font-size:13px;line-height:15px;color:#4d4d4d;letter-spacing:-0.28px;">Тип операции</div>
<div class="t" style="left:959px;top:252.00px;font-size:13px;line-height:15px;color:#4d4d4d;">Груз</div>
<div class="t" style="left:1180px;top:252.00px;font-size:13px;line-height:15px;color:#4d4d4d;">Начало</div>
<div class="t" style="left:1297px;top:252.00px;font-size:13px;line-height:15px;color:#4d4d4d;">Кол. мест</div>
<div class="t" style="left:1384px;top:252.00px;font-size:13px;line-height:15px;color:#4d4d4d;">Длина</div>
<div class="t" style="left:762px;top:283.00px;font-size:13px;line-height:15px;color:#4d4d4d;letter-spacing:-0.2px;">Объект операции</div>
<div class="t" style="left:1180px;top:283.00px;font-size:13px;line-height:15px;color:#4d4d4d;">Длит.</div>
<div class="t" style="left:1297px;top:283.00px;font-size:13px;line-height:15px;color:#4d4d4d;">Вес</div>
<div class="t" style="left:1384px;top:283.00px;font-size:13px;line-height:15px;color:#4d4d4d;">Ширина</div>
<div class="t" style="left:762px;top:313.50px;font-size:13px;line-height:15px;color:#2d5bc6;font-style:italic;">Описание</div>
<div class="t" style="left:1180px;top:313.50px;font-size:13px;line-height:15px;color:#4d4d4d;">Окончание</div>
<div class="t" style="left:1297px;top:313.50px;font-size:13px;line-height:15px;color:#4d4d4d;">Объем</div>
<div class="t" style="left:1384px;top:313.50px;font-size:13px;line-height:15px;color:#4d4d4d;">Высота</div>
<div class="t" style="left:762px;top:344.99px;font-size:11px;line-height:13px;color:#0b870b;font-style:italic;">Ограничения</div>
<div class="b" style="left:0;top:0;width:1508px;height:936px;clip-path:inset(367px 45px 96px 754px);">
<div class="b" style="left:754px;top:367px;width:709px;height:113px;background:#fcf1c9;"></div>
<div class="b" style="left:754px;top:367px;width:197px;height:28px;background:#fbe08a;"></div>
<div class="b" style="left:1171px;top:367px;width:1px;height:86px;background:#ffffff;"></div>
<div class="b" style="left:1288px;top:367px;width:1px;height:86px;background:#ffffff;"></div>
<div class="b" style="left:1375px;top:367px;width:1px;height:86px;background:#ffffff;"></div>
<div class="b" style="left:951px;top:367px;width:1px;height:28px;background:#ffffff;"></div>
<div class="b" style="left:754px;top:395px;width:709px;height:1px;background:#ffffff;"></div>
<div class="b" style="left:754px;top:424px;width:709px;height:1px;background:#ffffff;"></div>
<div class="b" style="left:754px;top:453px;width:709px;height:1px;background:#ffffff;"></div>
<div class="b" style="left:754px;top:480px;width:709px;height:1px;background:#e3e3e3;"></div>
<div class="t" style="left:762px;top:373.70px;font-size:13px;line-height:15px;color:#333;">Погрузка</div>
<div class="t" style="left:880px;width:400px;text-align:right;top:374.19px;font-size:11px;line-height:13px;color:#333;">20.10&nbsp;&nbsp;&nbsp;00:00</div>
<div class="t" style="left:967px;width:400px;text-align:right;top:373.60px;font-size:13px;line-height:15px;color:#333;">1</div>
<div class="t" style="left:762px;top:403.49px;font-size:11px;line-height:13px;color:#222;">Заказ на перевозку БХ00-279945 от 20.10.2022 0:00:00</div>
<div class="t" style="left:880px;width:400px;text-align:right;top:402.50px;font-size:13px;line-height:15px;color:#333;">0 мин.</div>
<div class="t" style="left:967px;width:400px;text-align:right;top:403.00px;font-size:13px;line-height:15px;color:#333;">1,820</div>
<div class="t" style="left:762px;top:431.89px;font-size:11px;line-height:13px;color:#2d5bc6;font-style:italic;">Заказчик: Агроторг ООО&nbsp;&nbsp;(&nbsp;&nbsp;13493 -Пятерочка. Белгородская обл.г.Белгор…</div>
<div class="t" style="left:880px;width:400px;text-align:right;top:431.09px;font-size:11px;line-height:13px;color:#333;">20.10&nbsp;&nbsp;&nbsp;00:00</div>
<div class="t" style="left:967px;width:400px;text-align:right;top:431.80px;font-size:13px;line-height:15px;color:#333;">0,0093150</div>
<div class="t" style="left:762px;top:460.89px;font-size:11px;line-height:13px;color:#0b870b;font-style:italic;">погр. 20 октября 2022 г. с 5:00 по 7:00</div>
<div class="b" style="left:754px;top:594px;width:709px;height:1px;background:#e3e3e3;"></div>
<div class="t" style="left:762px;top:487.70px;font-size:13px;line-height:15px;color:#333;">Погрузка</div>
<div class="t" style="left:880px;width:400px;text-align:right;top:488.19px;font-size:11px;line-height:13px;color:#333;">20.10&nbsp;&nbsp;&nbsp;00:00</div>
<div class="t" style="left:967px;width:400px;text-align:right;top:487.60px;font-size:13px;line-height:15px;color:#333;">1</div>
<div class="t" style="left:762px;top:517.49px;font-size:11px;line-height:13px;color:#222;">Заказ на перевозку БХ00-279938 от 20.10.2022 0:00:00</div>
<div class="t" style="left:880px;width:400px;text-align:right;top:516.50px;font-size:13px;line-height:15px;color:#333;">0 мин.</div>
<div class="t" style="left:967px;width:400px;text-align:right;top:517.00px;font-size:13px;line-height:15px;color:#333;">1,690</div>
<div class="t" style="left:762px;top:545.89px;font-size:11px;line-height:13px;color:#2d5bc6;font-style:italic;">Заказчик: Агроторг ООО&nbsp;&nbsp;(21661 -Пятерочка. Белгородская обл.г.Белгоро…</div>
<div class="t" style="left:880px;width:400px;text-align:right;top:545.09px;font-size:11px;line-height:13px;color:#333;">20.10&nbsp;&nbsp;&nbsp;00:00</div>
<div class="t" style="left:967px;width:400px;text-align:right;top:545.80px;font-size:13px;line-height:15px;color:#333;">0,0082320</div>
<div class="t" style="left:762px;top:574.89px;font-size:11px;line-height:13px;color:#0b870b;font-style:italic;">погр. 20 октября 2022 г. с 5:00 по 7:00</div>
<div class="b" style="left:754px;top:708px;width:709px;height:1px;background:#e3e3e3;"></div>
<div class="t" style="left:762px;top:601.70px;font-size:13px;line-height:15px;color:#333;">Погрузка</div>
<div class="t" style="left:880px;width:400px;text-align:right;top:602.19px;font-size:11px;line-height:13px;color:#333;">20.10&nbsp;&nbsp;&nbsp;00:00</div>
<div class="t" style="left:967px;width:400px;text-align:right;top:601.60px;font-size:13px;line-height:15px;color:#333;">2</div>
<div class="t" style="left:762px;top:631.49px;font-size:11px;line-height:13px;color:#222;">Заказ на перевозку ФР00-034201 от 20.10.2022 0:00:00</div>
<div class="t" style="left:880px;width:400px;text-align:right;top:630.50px;font-size:13px;line-height:15px;color:#333;">0 мин.</div>
<div class="t" style="left:967px;width:400px;text-align:right;top:631.00px;font-size:13px;line-height:15px;color:#333;">3,546</div>
<div class="t" style="left:762px;top:659.89px;font-size:11px;line-height:13px;color:#2d5bc6;font-style:italic;">Заказчик: Агроторг ООО&nbsp;&nbsp;(21661 -Пятерочка. Белгородская обл.г.Белгоро…</div>
<div class="t" style="left:880px;width:400px;text-align:right;top:659.09px;font-size:11px;line-height:13px;color:#333;">20.10&nbsp;&nbsp;&nbsp;00:00</div>
<div class="t" style="left:967px;width:400px;text-align:right;top:659.80px;font-size:13px;line-height:15px;color:#333;">0,0012170</div>
<div class="t" style="left:762px;top:688.89px;font-size:11px;line-height:13px;color:#0b870b;font-style:italic;">погр. 20 октября 2022 г. с 5:00 по 7:00</div>
<div class="b" style="left:754px;top:822px;width:709px;height:1px;background:#e3e3e3;"></div>
<div class="t" style="left:762px;top:715.70px;font-size:13px;line-height:15px;color:#333;">Погрузка</div>
<div class="t" style="left:880px;width:400px;text-align:right;top:716.19px;font-size:11px;line-height:13px;color:#333;">20.10&nbsp;&nbsp;&nbsp;00:00</div>
<div class="t" style="left:967px;width:400px;text-align:right;top:715.60px;font-size:13px;line-height:15px;color:#333;">13</div>
<div class="t" style="left:762px;top:745.49px;font-size:11px;line-height:13px;color:#222;">Заказ на перевозку УП00-022776 от 20.10.2022 0:00:00</div>
<div class="t" style="left:880px;width:400px;text-align:right;top:744.50px;font-size:13px;line-height:15px;color:#333;">0 мин.</div>
<div class="t" style="left:967px;width:400px;text-align:right;top:745.00px;font-size:13px;line-height:15px;color:#333;">30,190</div>
<div class="t" style="left:762px;top:773.89px;font-size:11px;line-height:13px;color:#2d5bc6;font-style:italic;">Заказчик: АЛЬФА-М ООО&nbsp;&nbsp;№14645 (ул. Зеленая, 25А, Комсомольский)</div>
<div class="t" style="left:880px;width:400px;text-align:right;top:773.09px;font-size:11px;line-height:13px;color:#333;">20.10&nbsp;&nbsp;&nbsp;00:00</div>
<div class="t" style="left:967px;width:400px;text-align:right;top:773.80px;font-size:13px;line-height:15px;color:#333;">0,1087180</div>
<div class="t" style="left:762px;top:802.89px;font-size:11px;line-height:13px;color:#0b870b;font-style:italic;">погр. 20 октября 2022 г. с 5:00 по 7:00</div>
<div class="b" style="left:754px;top:936px;width:709px;height:1px;background:#e3e3e3;"></div>
<div class="t" style="left:762px;top:829.70px;font-size:13px;line-height:15px;color:#333;">Погрузка</div>
<div class="t" style="left:880px;width:400px;text-align:right;top:830.19px;font-size:11px;line-height:13px;color:#333;">20.10&nbsp;&nbsp;&nbsp;00:00</div>
<div class="t" style="left:967px;width:400px;text-align:right;top:829.60px;font-size:13px;line-height:15px;color:#333;">3</div>
</div>
<svg style="left:1464px;top:252px" width="12" height="8" viewBox="0 0 12 8"><path d="M2.5 6.5 L6 2.5 L9.5 6.5 Z" fill="#cfcfcf"/></svg>
<div class="b" style="left:1466px;top:268px;width:8px;height:550px;background:#d4d4d4;border-radius:4px;"></div>
<div class="b" style="left:1466px;top:268px;width:8px;height:56px;background:#9e9e9e;border-radius:4px;"></div>
<svg style="left:1464px;top:824px" width="12" height="8" viewBox="0 0 12 8"><path d="M2.5 1.5 L6 5.5 L9.5 1.5 Z" fill="#555"/></svg>
<svg style="left:15px;top:899px" width="9" height="13" viewBox="0 0 9 13"><ellipse cx="4.5" cy="3.6" rx="3.5" ry="3.5" fill="#2e2010"/><ellipse cx="4.5" cy="4.5" rx="2.6" ry="3.2" fill="#f0b45a"/><path d="M0 13 V10.6 Q0 8 2.6 7.9 H6.4 Q9 8 9 10.6 V13 Z" fill="#3b90c6"/><path d="M3.8 7.9 L4.5 10.2 L5.2 7.9 Z" fill="#fff"/></svg>
<div class="t" style="left:44.5px;top:900.00px;font-size:13px;line-height:15px;color:#2d54c4;">Создан: Садчиков Иннокентий...</div>
<div class="b" style="left:44.5px;top:913px;width:195px;height:1px;background:#2d54c4;"></div>
<div class="b" style="left:449px;top:870px;width:1051px;height:56px;background:#f0f0f0;"></div>
<div class="t" style="left:454px;top:876.00px;font-size:13px;line-height:15px;color:#4d4d4d;">Длительность:</div>
<div class="b" style="left:454px;top:895px;width:91px;height:25px;border:1px solid #d6d6d6;border-radius:2px;background:#efefef;"></div>
<div class="t" style="left:458px;top:900.00px;font-size:13px;line-height:15px;color:#333;">2 ч. 35 м.</div>
<div class="t" style="left:555px;top:876.00px;font-size:13px;line-height:15px;color:#4d4d4d;">Расстояние:</div>
<div class="b" style="left:555px;top:895px;width:91px;height:25px;border:1px solid #d6d6d6;border-radius:2px;background:#efefef;"></div>
<div class="t" style="left:242px;width:400px;text-align:right;top:900.00px;font-size:13px;line-height:15px;color:#333;">0,000</div>
<div class="t" style="left:656px;top:876.00px;font-size:13px;line-height:15px;color:#4d4d4d;">Точек погр.:</div>
<div class="b" style="left:656px;top:895px;width:41px;height:25px;border:1px solid #d6d6d6;border-radius:2px;background:#efefef;"></div>
<div class="t" style="left:293px;width:400px;text-align:right;top:900.00px;font-size:13px;line-height:15px;color:#333;">1</div>
<div class="t" style="left:737px;top:876.00px;font-size:13px;line-height:15px;color:#4d4d4d;">разгр.:</div>
<div class="b" style="left:737px;top:895px;width:41px;height:25px;border:1px solid #d6d6d6;border-radius:2px;background:#efefef;"></div>
<div class="t" style="left:374px;width:400px;text-align:right;top:900.00px;font-size:13px;line-height:15px;color:#333;">16</div>
<div class="t" style="left:788px;top:876.00px;font-size:13px;line-height:15px;color:#4d4d4d;">Вес:</div>
<div class="b" style="left:788px;top:895px;width:71px;height:25px;border:1px solid #d6d6d6;border-radius:2px;background:#efefef;"></div>
<div class="t" style="left:455px;width:400px;text-align:right;top:900.00px;font-size:13px;line-height:15px;color:#333;">465,685</div>
<div class="t" style="left:869px;top:876.00px;font-size:13px;line-height:15px;color:#4d4d4d;">Объем:</div>
<div class="b" style="left:869px;top:895px;width:71px;height:25px;border:1px solid #d6d6d6;border-radius:2px;background:#efefef;"></div>
<div class="t" style="left:536px;width:400px;text-align:right;top:900.00px;font-size:13px;line-height:15px;color:#333;">1,1492891</div>
<div class="t" style="left:950px;top:876.00px;font-size:13px;line-height:15px;color:#4d4d4d;">Кол. мест:</div>
<div class="b" style="left:950px;top:895px;width:71px;height:25px;border:1px solid #d6d6d6;border-radius:2px;background:#efefef;"></div>
<div class="t" style="left:617px;width:400px;text-align:right;top:900.00px;font-size:13px;line-height:15px;color:#333;">99</div>
<div class="t" style="left:1031px;top:876.00px;font-size:13px;line-height:15px;color:#4d4d4d;">Стоимость груза:</div>
<div class="b" style="left:1031px;top:895px;width:91px;height:25px;border:1px solid #d6d6d6;border-radius:2px;background:#efefef;"></div>
<div class="t" style="left:718px;width:400px;text-align:right;top:900.00px;font-size:13px;line-height:15px;color:#333;">110 009,46</div>
<div class="t" style="left:1144px;top:900.00px;font-size:13px;line-height:15px;color:#4d4d4d;">Доходы:</div>
<div class="b" style="left:1200px;top:895px;width:91px;height:25px;border:1px solid #d6d6d6;border-radius:2px;background:#efefef;"></div>
<div class="t" style="left:887px;width:400px;text-align:right;top:900.00px;font-size:13px;line-height:15px;color:#333;">99 874,64</div>
<div class="t" style="left:1301px;top:900.00px;font-size:13px;line-height:15px;color:#4d4d4d;">Расходы:</div>
<div class="b" style="left:1364px;top:895px;width:91px;height:25px;border:1px solid #d6d6d6;border-radius:2px;background:#efefef;"></div>
<div class="t" style="left:1051px;width:400px;text-align:right;top:900.00px;font-size:13px;line-height:15px;color:#333;">0,00</div>
<div class="btn" style="left:1465px;top:894px;width:28px;height:24px;"></div>
<svg style="left:1473px;top:901px" width="14" height="13" viewBox="0 0 14 13"><path d="M4.6 10.94 L10.96 4.58 L8.42 2.04 L2.06 8.4 Z" fill="#4cc064" stroke="#2a6a34" stroke-width="0.5"/><path d="M10.96 4.58 L13.08 2.46 L10.54 -0.08 L8.42 2.04 Z" fill="#4a5562"/><path d="M0.5 12.5 L4.6 10.94 L2.06 8.4 Z" fill="#f5b240" stroke="#8a5a20" stroke-width="0.5"/><path d="M0.5 12.5 L2.2 11.9 L1.1 10.8 Z" fill="#3a2a10"/></svg>
</body></html>
